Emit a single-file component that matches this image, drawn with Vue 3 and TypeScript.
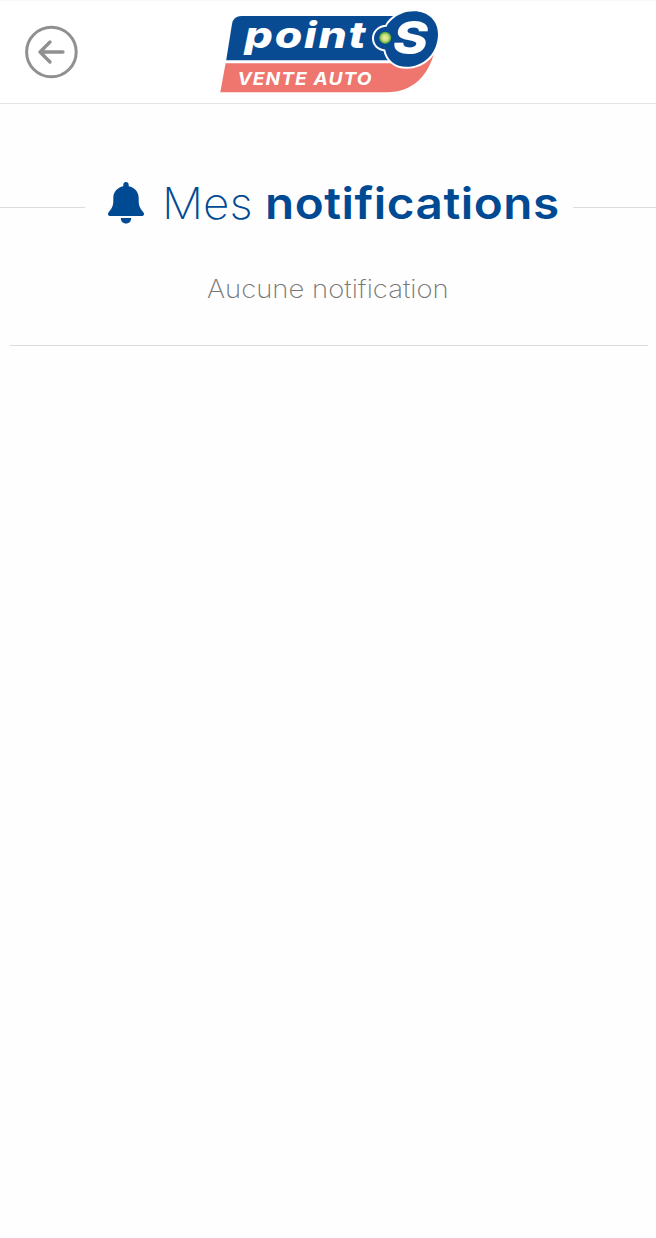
<script setup lang="ts">
const titleLight: string = 'Mes'
const titleStrong: string = 'notifications'
const notifications: string[] = []
</script>

<template>
  <div class="page">
    <header class="topbar">
      <button class="back" aria-label="Retour">
        <svg width="54" height="54" viewBox="0 0 54 54" fill="none" stroke="#909090">
          <circle cx="27.4" cy="27" r="24.8" stroke-width="3" />
          <path d="M39 27H16M26 17L16 27L26 37" stroke-width="3.3" stroke-linecap="round" stroke-linejoin="round" />
        </svg>
      </button>
      <svg class="logo" width="220" height="84" viewBox="220 10 220 84" role="img" aria-label="Point S Vente Auto">
        <defs>
          <radialGradient id="dot">
            <stop offset="0" stop-color="#eeea9c" />
            <stop offset=".5" stop-color="#cfe083" />
            <stop offset=".85" stop-color="#6fb545" />
            <stop offset="1" stop-color="#3c9544" />
          </radialGradient>
        </defs>
        <path d="M225.6 63.3H400L434.5 51C429 75 413 92.3 387 92.3H220.3Z" fill="#ee766e" />
        <path d="M226.2 60.3L232 24Q233.5 16 241.5 16H410V60.3Z" fill="#084b93" />
        <g class="badge">
          <path d="M386.5 26.8Q387.8 23.5 391 20.5C397 14.5 405 11.2 414 11.2C428 11.2 438 20.5 438 34C438 53 424 66.8 406.5 66.8C395.5 66.8 387 60 385.2 49.4C378.5 49 374 44.5 374 38.3C374 31.8 379.5 26.8 386.5 26.8Z" />
        </g>
        <circle cx="385.2" cy="37.8" r="6.1" fill="url(#dot)" />
        <g class="lettering">
          <text class="name" x="244.5" y="48.3" font-size="36" textLength="123" lengthAdjust="spacingAndGlyphs">point</text>
          <text x="393" y="53.8" font-size="45.5" textLength="35" lengthAdjust="spacingAndGlyphs">S</text>
          <text class="sub" x="237.5" y="85" font-size="18" textLength="135" lengthAdjust="spacingAndGlyphs">VENTE AUTO</text>
        </g>
      </svg>
    </header>

    <main>
      <div class="heading">
        <span class="rule left"></span>
        <svg class="bell" width="36" height="42" viewBox="0 0 36 42" fill="#004a94">
          <path d="M18 0C16.2 0 15.3 1.2 15.3 3V4.2C9.3 5.4 5.3 9.8 5.3 16V19C5.3 24 3.8 26.5.8 30C-.8 32 .1 34 2.3 34H33.7C35.9 34 36.8 32 35.2 30C32.2 26.5 30.7 24 30.7 19V16C30.7 9.8 26.7 5.4 20.7 4.2V3C20.7 1.2 19.8 0 18 0Z" />
          <path d="M12.8 36H23.2C23.2 39.4 21 41.5 18 41.5S12.8 39.4 12.8 36Z" />
        </svg>
        <h1><span class="thin">{{ titleLight }}</span><strong>{{ titleStrong }}</strong></h1>
        <span class="rule right"></span>
      </div>
      <p v-if="notifications.length === 0" class="empty"><span>Aucune notification</span></p>
      <hr />
    </main>
  </div>
</template>

<style>
body { background: #fefefe; }
</style>

<style scoped>
.page { min-height: 1238px; overflow: hidden; background: #fefefe; font-family: Inter, "Liberation Sans", sans-serif; }
.topbar { box-sizing: border-box; height: 104px; padding: 10px 0 0 24px; display: flex; align-items: flex-start; border-top: 1px solid #f8f8f8; border-bottom: 1px solid #e3e3e3; background: #fff; }
.back { margin: 14px 0 0; padding: 0; border: 0; background: none; width: 54px; height: 54px; }
.back svg { display: block; }
.logo { display: block; overflow: visible; margin: -1px 0 0 142px; }
.badge { fill: #084b93; stroke: #fff; stroke-width: 4; paint-order: stroke; stroke-linejoin: round; }
.lettering { font-family: Inter, sans-serif; font-weight: 800; font-style: italic; fill: #fff; }
.name { letter-spacing: 1.5px; }
.sub { font-weight: 700; letter-spacing: 1px; }
.heading { display: flex; align-items: flex-start; height: 60px; margin-top: 70px; color: #004a94; }
.rule { height: 1px; margin-top: 33px; background: #dcdcdc; }
.rule.left { width: 85px; }
.rule.right { flex: 1; }
.bell { margin: 8px 0 0 23px; flex: none; }
h1 { display: flex; width: 411px; margin: -1px 0 0 18px; font-size: 44px; line-height: 60px; white-space: nowrap; }
.thin { width: 103px; font-weight: 200; transform: scaleX(1.04); transform-origin: 0 50%; }
strong { font-weight: 600; letter-spacing: .5px; transform: scaleX(1.082); transform-origin: 0 50%; }
.empty { margin: 40px 0 0; height: 30px; text-align: center; font-size: 25px; line-height: 30px; font-weight: 250; color: #777; }
.empty span { display: inline-block; transform: scaleX(1.1); }
hr { margin: 41px 8px 0 10px; border: 0; height: 1px; background: #dcdcdc; }
</style>
